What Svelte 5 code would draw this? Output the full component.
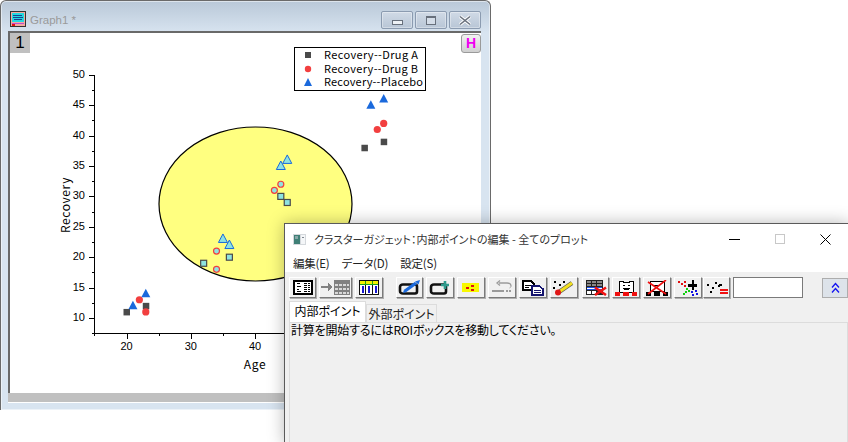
<script lang="ts">
  const sx = (v: number) => 126.5 + (v - 20) * 6.43;
  const sy = (v: number) => 318 - (v - 10) * 6.08;

  const drugA = [[20, 11], [23, 12], [57, 38], [60, 39]];
  const drugB = [[22, 13], [23, 11], [59, 41], [60, 42]];
  const placebo = [[21, 12], [23, 14], [58, 45], [60, 46]];
  const drugAIn = [[32, 19], [36, 20], [44, 30], [45, 29]];
  const drugBIn = [[34, 21], [34, 18], [44, 32], [43, 31]];
  const placeboIn = [[35, 23], [36, 22], [44, 35], [45, 36]];

  const yMajor = [10, 15, 20, 25, 30, 35, 40, 45, 50];
  const yMinor = [7.5, 12.5, 17.5, 22.5, 27.5, 32.5, 37.5, 42.5, 47.5];
  const xMajor = [20, 30, 40];
  const xMinor = [15, 25, 35];

  const legend = [
    { y: 55, label: 'Recovery--Drug A', width: 94 },
    { y: 69, label: 'Recovery--Drug B', width: 94 },
    { y: 82, label: 'Recovery--Placebo', width: 99 }
  ];

  const tri = (x: number, y: number) => `${x},${y - 5} ${x + 4.5},${y + 3.5} ${x - 4.5},${y + 3.5}`;
  const menus = ['編集(E)', 'データ(D)', '設定(S)'];
</script>

<div class="desktop">
  <section class="graph">
    <header class="graph-title">
      <svg class="graph-icon" width="16" height="16" viewBox="0 0 16 16" shape-rendering="crispEdges">
        <rect x="0.5" y="0.5" width="15" height="15" fill="#f2a9a0" stroke="#333" />
        <rect x="2" y="2" width="12" height="9" fill="#22d8e0" />
        <path d="M3 4h9M3 6h10M4 8h8" stroke="#1b3f8f" />
        <path d="M2 12h12" stroke="#c14bd0" />
        <rect x="2" y="13" width="3" height="2" fill="#e01010" />
      </svg>
      <span class="graph-name">Graph1 *</span>
      <div class="caption">
        <button aria-label="最小化"><i class="cap-min"></i></button>
        <button aria-label="元に戻す"><i class="cap-restore"></i></button>
        <button aria-label="閉じる">
          <svg width="14" height="11" viewBox="0 0 14 11">
            <path d="M2 1.5l10 8M12 1.5l-10 8" stroke="#fff" stroke-width="3.4" />
            <path d="M2 1.5l10 8M12 1.5l-10 8" stroke="#68707c" stroke-width="1.6" />
          </svg>
        </button>
      </div>
    </header>

    <div class="page">
      <span class="layer-tab">1</span>
      <span class="h-btn">H</span>
      <svg class="plot" width="471" height="360" viewBox="10 33 471 360">
        <ellipse cx="255.5" cy="204" rx="96.5" ry="77" fill="#ffff80" stroke="#000" stroke-width="1.2" />

        <g shape-rendering="crispEdges" stroke="#000">
          <path d="M94.5 75V333.5M94 333.5H300" stroke-width="1.2" fill="none" />
          {#each yMajor as v}
            <line x1="89" x2="94" y1={Math.round(sy(v)) + 0.5} y2={Math.round(sy(v)) + 0.5} />
          {/each}
          {#each yMinor as v}
            <line x1="92" x2="94" y1={Math.round(sy(v)) + 0.5} y2={Math.round(sy(v)) + 0.5} />
          {/each}
          {#each xMajor as v}
            <line y1="334" y2="339" x1={Math.round(sx(v)) + 0.5} x2={Math.round(sx(v)) + 0.5} />
          {/each}
          {#each xMinor as v}
            <line y1="334" y2="336" x1={Math.round(sx(v)) + 0.5} x2={Math.round(sx(v)) + 0.5} />
          {/each}
        </g>

        <g class="tick-text">
          {#each yMajor as v}
            <text x="85" y={sy(v) + 3} text-anchor="end">{v}</text>
          {/each}
          {#each xMajor as v}
            <text x={sx(v)} y="350" text-anchor="middle">{v}</text>
          {/each}
        </g>

        <text class="axis-text" x="255" y="369" text-anchor="middle">Age</text>
        <text class="axis-text" transform="translate(70 205) rotate(-90)" text-anchor="middle">Recovery</text>

        {#each drugA as [x, y]}
          <rect x={sx(x) - 3} y={sy(y) - 3} width="6.5" height="6.5" fill="#4a4a4a" />
        {/each}
        {#each drugB as [x, y]}
          <circle cx={sx(x)} cy={sy(y)} r="3.6" fill="#f23f3f" />
        {/each}
        {#each placebo as [x, y]}
          <polygon points={tri(sx(x), sy(y))} fill="#1a69dc" />
        {/each}

        {#each drugAIn as [x, y]}
          <rect x={sx(x) - 3} y={sy(y) - 3} width="6" height="6" fill="#8fe3e0" stroke="#4a4a4a" stroke-width="1.2" />
        {/each}
        {#each drugBIn as [x, y]}
          <circle cx={sx(x)} cy={sy(y)} r="3" fill="#8fe3e0" stroke="#f23f3f" stroke-width="1.2" />
        {/each}
        {#each placeboIn as [x, y]}
          <polygon points={tri(sx(x), sy(y))} fill="#8fe3e0" stroke="#1a69dc" stroke-width="1" />
        {/each}

        <rect x="294.5" y="47.5" width="131" height="43" fill="#fff" stroke="#000" shape-rendering="crispEdges" />
        <rect x="305" y="52" width="6" height="6" fill="#4a4a4a" />
        <circle cx="308" cy="69" r="3.2" fill="#f23f3f" />
        <polygon points="308,78 312,86 304,86" fill="#1a69dc" />
        {#each legend as row}
          <text class="legend-text" x="324" y={row.y + 4} textLength={row.width} lengthAdjust="spacing">{row.label}</text>
        {/each}
      </svg>
    </div>

    <div class="graph-scroll"></div>
  </section>

  <section class="gadget">
    <header class="gadget-title">
      <svg width="13" height="11" viewBox="0 0 13 11" shape-rendering="crispEdges">
        <rect width="13" height="11" fill="#d4d8dc" />
        <rect x="1" y="1" width="6" height="9" fill="#3f7f76" />
        <rect x="2" y="2" width="3" height="3" fill="#88a8a8" />
        <rect x="8" y="1" width="4" height="9" fill="#f4f6f8" />
        <rect x="9" y="3" width="2" height="1" fill="#808890" />
      </svg>
      <span class="gadget-name">クラスターガジェット：内部ポイントの編集 - 全てのプロット</span>
      <div class="win-controls">
        <svg width="11" height="11" viewBox="0 0 11 11" shape-rendering="crispEdges"><path d="M0 5.5H11" stroke="#000" /></svg>
        <svg width="10" height="10" viewBox="0 0 10 10" shape-rendering="crispEdges"><rect x="0.5" y="0.5" width="9" height="9" fill="none" stroke="#c8c8c8" /></svg>
        <svg width="11" height="11" viewBox="0 0 11 11"><path d="M0.5 0.5L10.5 10.5M10.5 0.5L0.5 10.5" stroke="#000" /></svg>
      </div>
    </header>

    <nav class="menu">
      {#each menus as item}
        <span>{item}</span>
      {/each}
    </nav>

    <div class="body">
      <div class="toolbar">
        <span class="tool narrow"><svg width="20" height="15" viewBox="0 0 20 15" shape-rendering="crispEdges">
          <rect x="1" y="1" width="18" height="13" fill="#fff" stroke="#000" stroke-width="2" />
          <path d="M4 3.500h3M4 6.500h4M4 9.500h2M4 11.500h4M11 3.500h6M11 5.500h6M11 7.500h6M11 9.500h6M11 11.500h6" stroke="#000" />
          <path d="M9.500 3v9M14.500 3v9" stroke="#fff" />
        </svg></span>
        <span class="tool wide"><svg width="29" height="15" viewBox="0 0 29 15" shape-rendering="crispEdges">
          <path d="M0 7h9" stroke="#808080" stroke-width="2" />
          <path d="M7 3h1v1h1v1h1v1h1v2h-1v1h-1v1h-1v1h-1z" fill="#808080" />
          <rect x="13" y="0" width="16" height="15" fill="#808080" />
          <path d="M14 4h14v2H14zM14 8h14v2H14zM14 12h14v2H14z" fill="#d8d8d8" />
          <path d="M17 4v10M21 4v10M25 4v10" stroke="#808080" />
        </svg></span>
        <span class="tool"><svg width="20" height="15" viewBox="0 0 20 15" shape-rendering="crispEdges">
          <rect x="0" y="0" width="20" height="15" fill="#111" />
          <rect x="1" y="1" width="18" height="3" fill="#f2f200" />
          <rect x="1" y="4" width="18" height="1" fill="#19a019" />
          <rect x="1" y="5" width="18" height="9" fill="#fff" />
          <path d="M6.500 1v4M13.500 1v4" stroke="#19a019" />
          <path d="M3.500 6v7M9.500 6v7M16.500 6v7" stroke="#1818d0" stroke-width="2" />
          <path d="M6.500 5v9M13.500 5v9" stroke="#111" />
        </svg></span>
        <span class="sep"></span>
        <span class="tool narrow"><svg width="23" height="16" viewBox="0 0 23 16">
          <path d="M5 4.500h12q2 0 2 2v5q0 2-2 2H5q-3 0-3-2.500v-4q0-2.500 3-2.500z" fill="none" stroke="#111" stroke-width="2.600" />
          <path d="M7 11L18 3" stroke="#1a69dc" stroke-width="3.400" />
          <path d="M17 1.500l5-1.500-1.500 4.500zM5 13l1-3.500 2.500 2.500z" fill="#1a69dc" />
        </svg></span>
        <span class="tool"><svg width="22" height="16" viewBox="0 0 22 16">
          <path d="M5 4.500h10q2 0 2 2v5q0 2-2 2H5q-3 0-3-2.500v-4q0-2.500 3-2.500z" fill="none" stroke="#111" stroke-width="2.600" />
          <path d="M16 1v8M12 5h8" stroke="#2e9a8c" stroke-width="2.600" />
        </svg></span>
        <span class="tool"><svg width="18" height="10" viewBox="0 0 18 10" shape-rendering="crispEdges">
          <rect x="0" y="0" width="17" height="9" fill="#f8f800" />
          <path d="M4 4h3v2H4zM9 2h3v2H9zM9 6h3v2H9z" fill="#e01010" />
        </svg></span>
        <span class="tool"><svg width="22" height="15" viewBox="0 0 22 15">
          <path d="M20 6q0-3-4-3H8M9 .5L6 3l3 2.500" fill="none" stroke="#9a9a9a" stroke-width="1.300" />
          <path d="M20 6q0 2-2 2" fill="none" stroke="#9a9a9a" stroke-dasharray="1.500 1" />
          <path d="M1 11h12" stroke="#9a9a9a" stroke-width="2" />
          <path d="M15 11h6" stroke="#9a9a9a" stroke-width="2" stroke-dasharray="2 1" />
        </svg></span>
        <span class="tool"><svg width="22" height="16" viewBox="0 0 22 16" shape-rendering="crispEdges">
          <path d="M1 1h8l3 3v6H1z" fill="#fff" stroke="#000" stroke-width="1.600" />
          <path d="M3 5h6M3 7h4" stroke="#000" />
          <path d="M10 6h7l4 3v6H10z" fill="#fff" stroke="#14146e" stroke-width="1.600" />
          <path d="M12 10h7M12 12h7" stroke="#14146e" />
        </svg></span>
        <span class="tool"><svg width="24" height="16" viewBox="0 0 24 16">
          <path d="M2 1h2v2H2zM7 4h2v2H7zM1 7h2v2H1zM11 1h2v2h-2zM11 7h2v2h-2z" fill="#000" shape-rendering="crispEdges" />
          <path d="M7 12L20 3" stroke="#555" stroke-width="4.500" />
          <path d="M7 12L20 3" stroke="#f2e020" stroke-width="3" />
          <circle cx="6" cy="12.500" r="3" fill="#e01818" />
        </svg></span>
        <span class="tool after-gap narrow"><svg width="22" height="16" viewBox="0 0 22 16" shape-rendering="crispEdges">
          <rect x="1" y="0" width="17" height="15" fill="#222" />
          <path d="M2 1h4v2H2zM7 1h4v2H7zM12 1h5v2h-5zM2 4h4v2H2zM7 4h4v2H7zM12 4h5v2h-5z" fill="#888" />
          <path d="M2 7h15v3H2z" fill="#fff" />
          <path d="M2 7h15M2 9h15" stroke="#1a50e8" />
          <path d="M2 11h4v3H2zM7 11h4v3H7z" fill="#fff" />
          <path d="M10 7.500L21 15M21 7.500L10 15" stroke="#f01010" stroke-width="2.500" shape-rendering="auto" />
        </svg></span>
        <span class="tool"><svg width="22" height="16" viewBox="0 0 22 16" shape-rendering="crispEdges">
          <path d="M4 1h4v1h6V1h4v11H4z" fill="#fff" stroke="#000" />
          <path d="M8 5h2M13 5h2M8 8h7M9 9h5" stroke="#000" />
          <path d="M0 12h5v4H0zM8 12h6v4H8zM17 12h5v4h-5z" fill="#f01010" />
        </svg></span>
        <span class="tool"><svg width="22" height="16" viewBox="0 0 22 16" shape-rendering="crispEdges">
          <path d="M4 1h14v10H4z" fill="#fff" stroke="#000" />
          <path d="M8 5h6" stroke="#000" />
          <path d="M0 12h5v4H0zM8 12h6v4H8zM17 12h5v4h-5z" fill="#000" />
          <path d="M2 2L20 14M20 0L2 14" stroke="#f01010" stroke-width="1.600" shape-rendering="auto" />
        </svg></span>
        <span class="tool"><svg width="22" height="16" viewBox="0 0 22 16" shape-rendering="crispEdges">
          <path d="M1 1h2v2H1zM4 3h2v2H4zM7 1h2v2H7zM7 5h2v2H7z" fill="#e01010" />
          <path d="M9 8h2v2H9zM11 10h2v2h-2zM8 11h2v2H8zM6 13h2v2H6z" fill="#10d010" />
          <path d="M14 11h2v2h-2zM18 10h2v2h-2zM15 14h2v2h-2zM19 13h2v2h-2z" fill="#1010e0" />
          <path d="M11 4h9v2.500h-9zM14.500 0h2.500v10h-2.500z" fill="#000" />
        </svg></span>
        <span class="tool tight narrow"><svg width="22" height="14" viewBox="0 0 22 14" shape-rendering="crispEdges">
          <path d="M9 1h2v2H9zM1 3h2v2H1zM12 4h2v2h-2zM6 6h2v2H6zM4 10h2v2H4zM13 3h3v2h-3z" fill="#000" />
          <path d="M14 8h8v2h-8zM14 11h8v2h-8z" fill="#f01010" />
        </svg></span>
        <input class="value-box" type="text" aria-label="値" />
        <button class="collapse" aria-label="折りたたむ">
          <svg width="9" height="12" viewBox="0 0 9 12"><path d="M1 5.500l3.500-4 3.500 4M1 10.500l3.500-4 3.500 4" fill="none" stroke="#1414f0" stroke-width="1.300" /></svg>
        </button>
      </div>

      <div class="tabs">
        <span class="tab active">内部ポイント</span>
        <span class="tab">外部ポイント</span>
      </div>
      <div class="panel">計算を開始するにはROIボックスを移動してください。</div>
    </div>
  </section>
</div>

<style>
  :global(body) {
    margin: 0;
    background: #fff;
    overflow: hidden;
  }

  .desktop {
    position: relative;
    width: 848px;
    height: 442px;
    overflow: hidden;
    font-family: "Noto Sans CJK JP", "Liberation Sans", sans-serif;
    font-size: 12px;
    font-feature-settings: "palt";
    color: #000;
  }

  .graph {
    position: absolute;
    left: 0;
    top: 0;
    width: 491px;
    height: 410px;
    box-sizing: border-box;
    padding: 0 9px 0 7px;
    display: flex;
    flex-direction: column;
    border: 1px solid #6a6a6a;
    border-bottom: 0;
    border-radius: 6px 6px 0 0;
    background: linear-gradient(180deg, #b9c8d8 0, #d8e4f0 32px, #d8e4f0 100%);
    box-shadow: inset 0 0 0 1px rgba(255, 255, 255, 0.5);
  }

  .graph-title {
    height: 30px;
    flex: none;
    display: flex;
    align-items: flex-start;
    gap: 4px;
    padding: 10px 0 0 2px;
    box-sizing: border-box;
  }

  .graph-icon {
    flex: none;
  }

  .graph-name {
    font-family: "Liberation Sans", sans-serif;
    font-size: 11.500px;
    line-height: 19px;
    color: #9a9a9a;
  }

  .caption {
    margin-left: auto;
    display: flex;
    gap: 2px;
  }

  .caption button {
    width: 32px;
    height: 18px;
    padding: 0;
    border: 1px solid #8b9bb0;
    border-radius: 2px;
    background: linear-gradient(180deg, #d0dae6, #b8c6d6);
    display: flex;
    align-items: center;
    justify-content: center;
    box-shadow: inset 0 0 0 1px rgba(255, 255, 255, 0.35);
  }

  .cap-min {
    display: block;
    width: 9px;
    height: 3px;
    margin-top: 4px;
    background: #eef2f6;
    border: 1px solid #68707c;
  }

  .cap-restore {
    display: block;
    width: 8px;
    height: 6px;
    background: #d4dde8;
    border: 1px solid #68707c;
    border-top-width: 2px;
  }

  .page {
    position: relative;
    width: 473px;
    height: 362px;
    flex: none;
    box-sizing: border-box;
    border-top: 2px solid #696969;
    border-left: 2px solid #696969;
    background: #fff;
  }

  .plot {
    display: block;
  }

  .layer-tab {
    position: absolute;
    left: 0;
    top: 0;
    width: 20px;
    height: 20px;
    background: #c0c0c0;
    font-family: "Liberation Sans", sans-serif;
    font-size: 17px;
    line-height: 20px;
    text-align: center;
  }

  .h-btn {
    position: absolute;
    right: 0;
    top: 1px;
    width: 18px;
    height: 17px;
    border: 1px solid #9a9a9a;
    border-radius: 3px;
    background: linear-gradient(180deg, #f2f2f2, #cfcfcf);
    color: #f000f0;
    font-family: "Liberation Sans", sans-serif;
    font-size: 14px;
    font-weight: 700;
    line-height: 17px;
    text-align: center;
  }

  .tick-text text {
    font-family: "Liberation Sans", sans-serif;
    font-size: 11px;
    fill: #000;
  }

  .axis-text {
    font-family: "Noto Sans CJK JP", sans-serif;
    font-size: 12px;
    letter-spacing: 0.6px;
    fill: #000;
  }

  .legend-text {
    font-family: "Noto Sans CJK JP", sans-serif;
    font-size: 11px;
    fill: #000;
  }

  .graph-scroll {
    height: 9px;
    flex: none;
    background: #c0c0c0;
    border-bottom: 1px solid #fff;
  }

  .gadget {
    position: absolute;
    left: 284px;
    top: 223px;
    width: 566px;
    height: 221px;
    box-sizing: border-box;
    border: 1px solid #5a5a5a;
    background: #fff;
    box-shadow: 0 0 16px rgba(0, 0, 0, 0.28);
  }

  .gadget-title {
    height: 30px;
    display: flex;
    align-items: center;
    padding: 0 0 0 8px;
    box-sizing: border-box;
  }

  .gadget-name {
    margin-left: 8px;
    margin-top: -1px;
    font-size: 11px;
    color: #333;
  }

  .win-controls {
    margin-left: auto;
    display: flex;
    align-items: center;
    gap: 35px;
    margin-right: 18px;
  }

  .menu {
    height: 18px;
    display: flex;
    gap: 12px;
    padding-left: 8px;
    align-items: center;
    font-size: 11.500px;
    letter-spacing: -0.2px;
    color: #222;
  }

  .body {
    height: 171px;
    background: #f0f0f0;
    padding: 5px 0 0 4px;
    box-sizing: border-box;
  }

  .toolbar {
    display: flex;
    align-items: flex-start;
    gap: 3px;
    height: 21px;
  }

  .tool {
    width: 28px;
    height: 21px;
    flex: none;
    box-sizing: border-box;
    display: flex;
    align-items: center;
    justify-content: center;
    background: #f0f0f0;
    border: 1px solid;
    border-color: #fff #7a7a7a #7a7a7a #fff;
    box-shadow: 1px 1px 0 #b0b0b0;
  }

  .tool.narrow {
    width: 27px;
  }

  .tool.wide {
    width: 33px;
  }

  .tool.after-gap {
    margin-left: 1px;
  }

  .tool.tight {
    margin-left: -2px;
  }

  .sep {
    width: 7px;
    flex: none;
  }

  .value-box {
    width: 70px;
    height: 21px;
    flex: none;
    box-sizing: border-box;
    border: 1px solid #7a7a7a;
    background: #fff;
    padding: 0;
    margin: 0;
  }

  .collapse {
    width: 26px;
    height: 20px;
    margin: 1px 0 0 16px;
    flex: none;
    padding: 0;
    border: 1px solid #adadad;
    background: #dde3ea;
    display: flex;
    align-items: center;
    justify-content: center;
  }

  .tabs {
    display: flex;
    align-items: flex-end;
    height: 21px;
    margin-top: 3px;
  }

  .tab {
    height: 18px;
    width: 71px;
    box-sizing: border-box;
    border: 1px solid #dcdcdc;
    border-bottom: 0;
    line-height: 17px;
    text-align: center;
    color: #222;
    background: #f0f0f0;
  }

  .tab.active {
    width: 77px;
    height: 21px;
    background: #fff;
    line-height: 18px;
    color: #000;
  }

  .panel {
    height: 140px;
    width: 559px;
    box-sizing: border-box;
    border: 1px solid #dcdcdc;
    padding: 0 1px;
    line-height: 13px;
    letter-spacing: -0.2px;
    background: #f0f0f0;
  }
</style>
